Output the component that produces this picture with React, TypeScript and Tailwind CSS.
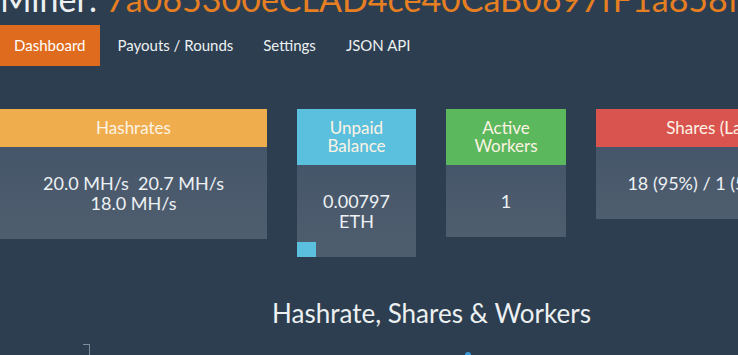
import React from "react";

const font = { fontFamily: "Lato, 'Open Sans', sans-serif" };

function StatCard({
  title,
  head,
  width,
  children,
  bar,
}: {
  title: React.ReactNode;
  head: string;
  width: string;
  children: React.ReactNode;
  bar?: boolean;
}) {
  return (
    <div className={`${width} shrink-0 self-start`}>
      <div className={`${head} px-2 py-[10px] text-center text-[17px] leading-[18px] text-[#fdf3e4]`}>
        {title}
      </div>
      <div className="relative bg-gradient-to-b from-[#46566a] to-[#4f5e6e] px-2 py-[26px] text-center text-[18px] leading-[20px] text-[#edf1f4]">
        {children}
        {bar && <div className="absolute bottom-0 left-0 h-[15px] w-[19px] bg-[#5bc0de]" />}
      </div>
    </div>
  );
}

export default function App() {
  return (
    <div className="h-[355px] w-[738px] overflow-hidden bg-[#2c3e50]" style={font}>
      <h1 className="-mt-[19px] whitespace-nowrap text-[34px] leading-[36px] text-[#ecf0f1]">
        Miner: <span className="text-[#e67e22]">7a065300eCLAD4ce40CaB0697fF1a858f0C8</span>
      </h1>

      <nav className="mt-[8px] flex h-[41px] items-center text-[15px] text-[#ecf0f1]">
        <a className="flex h-full items-center bg-[#df6c1e] pl-[14px] pr-[15px] text-white">Dashboard</a>
        <a className="flex h-full items-center pl-[17px] pr-[15px]">Payouts / Rounds</a>
        <a className="flex h-full items-center px-[15px]">Settings</a>
        <a className="flex h-full items-center px-[15px]">JSON API</a>
      </nav>

      <div className="mt-[43px] flex gap-[30px] whitespace-nowrap">
        <StatCard title="Hashrates" head="bg-[#f0ad4e]" width="w-[267px]">
          20.0 MH/s&nbsp; 20.7 MH/s
          <br />
          18.0 MH/s
        </StatCard>
        <StatCard
          title={<>Unpaid<br />Balance</>}
          head="bg-[#5bc0de]"
          width="w-[119px]"
          bar
        >
          0.00797
          <br />
          ETH
        </StatCard>
        <StatCard
          title={<>Active<br />Workers</>}
          head="bg-[#5cb85c]"
          width="w-[120px]"
        >
          1
        </StatCard>
        <StatCard title="Shares (Last 24h)" head="bg-[#d9534f]" width="w-[267px]">
          18 (95%) / 1 (5%) / 0 (0%)
        </StatCard>
      </div>

      <div className="relative mt-[40px] pl-[272px]">
        <h2 className="text-[26px] leading-[32px] text-[#ecf0f1]">Hashrate, Shares &amp; Workers</h2>
        <div className="absolute left-[83px] top-[47px] h-[20px] w-[7px] border-r border-t border-[#7f8c9a]" />
        <div className="absolute left-[465px] top-[55px] h-[6px] w-[6px] rounded-full bg-[#3a9ad9]" />
      </div>
    </div>
  );
}
